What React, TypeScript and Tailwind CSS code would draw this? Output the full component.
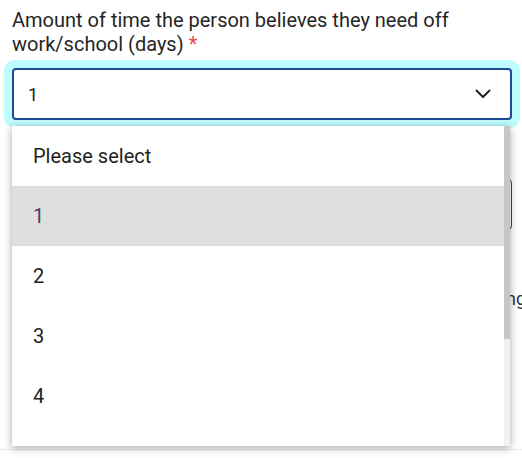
import React from 'react';

const options = ['Please select', '1', '2', '3', '4', '5', '6', '7'];

function Chevron() {
  return (
    <svg width="16" height="10" viewBox="0 0 16 10" fill="none" className="text-[#222]">
      <path d="M1.5 1.5 L8 8 L14.5 1.5" stroke="currentColor" strokeWidth="2" strokeLinecap="round" strokeLinejoin="round" />
    </svg>
  );
}

export default function App() {
  const selected = '1';

  return (
    <div className="w-[522px] h-[458px] overflow-hidden bg-white font-['Roboto','Liberation_Sans',sans-serif] text-[#222]">
      <div className="relative h-[450px] border-b border-[#e8e8e8]">
        <div className="px-[12px] pt-[8px]">
          <label className="block w-[460px] text-[20px] leading-[24px] text-[#262626]">
            Amount of time the person believes they need off work/school (days){' '}
            <span className="text-[#e5484d]">*</span>
          </label>

          {/* focused select */}
          <div className="mt-[12px] h-[52px] w-[500px] rounded-[4px] border-2 border-[#1f4a9a] bg-white shadow-[0_0_0_8px_#bffcfe] flex items-center justify-between pl-[14px] pr-[19px]">
            <span className="text-[18px]">{selected}</span>
            <Chevron />
          </div>

          {/* next field, mostly hidden behind the open list */}
          <div className="mt-[22px] text-[18px] leading-[24px] text-[#262626]">How is the person coping?</div>
          <div className="mt-[13px] h-[51px] w-[500px] rounded-[4px] border border-[#1f4a9a]" />
          <div className="mt-[55px] w-[514px] flex justify-end whitespace-nowrap text-[18px] text-[#333]">
            Difficulties with eating
          </div>
        </div>

        {/* open listbox */}
        <div className="absolute left-[12px] top-[126px] w-[498px] h-[320px] bg-white shadow-[0_2px_8px_rgba(0,0,0,0.35)] flex">
          <ul className="flex-1 overflow-hidden">
            {options.map((o) => (
              <li
                key={o}
                className={
                  o === selected
                    ? 'h-[60px] flex items-center pl-[21px] text-[20px] bg-[#dfdfdf] text-[#3d4560]'
                    : 'h-[60px] flex items-center pl-[21px] text-[20px] text-[#222]'
                }
              >
                {o}
              </li>
            ))}
          </ul>
          <div className="w-[6px] h-full bg-[#f1f1f1] flex flex-col">
            <div className="h-[213px] bg-[#c6c6c6]" />
          </div>
        </div>
      </div>
    </div>
  );
}
